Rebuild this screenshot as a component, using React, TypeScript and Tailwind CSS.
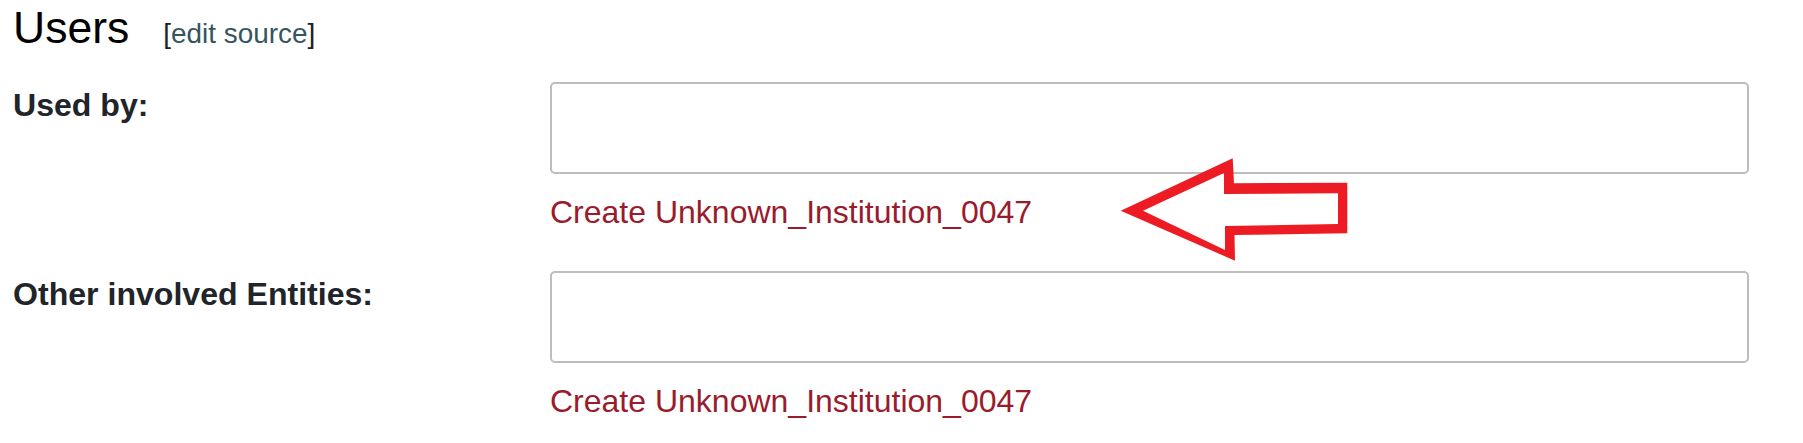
import React from "react";

interface FieldRowProps {
  label: string;
  linkText: string;
  className?: string;
}

function FieldRow({ label, linkText, className = "" }: FieldRowProps) {
  return (
    <div className={`flex ${className}`}>
      {/* Label column */}
      <div className="w-[537px] flex-shrink-0 pt-[5px] text-[32.1px] leading-[36px] font-bold text-[#212529]">
        {label}
      </div>

      {/* Input + create link */}
      <div className="flex-1 flex flex-col">
        <div className="h-[92px] w-full rounded-[5px] border-2 border-[#bdbdbd] bg-white" />
        <a className="mt-[20px] text-[32px] leading-[36px] text-[#9a1b2b] cursor-pointer w-fit">
          {linkText}
        </a>
      </div>
    </div>
  );
}

export default function App() {
  return (
    <div
      className="relative w-[1803px] h-[443px] overflow-hidden bg-white pl-[13px] pr-[54px]"
      style={{ fontFamily: '"Liberation Sans", Arial, sans-serif' }}
    >
      {/* Section heading */}
      <div className="flex items-baseline h-[46px] pt-[5px]">
        <h2 className="text-[44.5px] leading-[46px] font-normal text-black">Users</h2>
        <span className="ml-[34px] text-[27.9px] text-[#202122]">
          [<span className="text-[#35565f]">edit source</span>]
        </span>
      </div>

      <FieldRow
        className="mt-[36px]"
        label="Used by:"
        linkText="Create Unknown_Institution_0047"
      />
      <FieldRow
        className="mt-[41px]"
        label="Other involved Entities:"
        linkText="Create Unknown_Institution_0047"
      />

      {/* Red annotation arrow pointing at the first create link */}
      <svg
        className="absolute left-0 top-0 pointer-events-none"
        width="1803"
        height="443"
        viewBox="0 0 1803 443"
      >
        <path
          fill="#ed1c24"
          fillRule="evenodd"
          d="M1120.7 210.7 L1232.7 158.3 L1234 183.3 L1347.3 182.7 L1347.3 233.3 L1234.5 235 L1235 260.7 Z M1143 210.7 L1224 173 L1224 194 L1338 193.3 L1338 224 L1225 226 L1225 250 Z"
        />
      </svg>
    </div>
  );
}
